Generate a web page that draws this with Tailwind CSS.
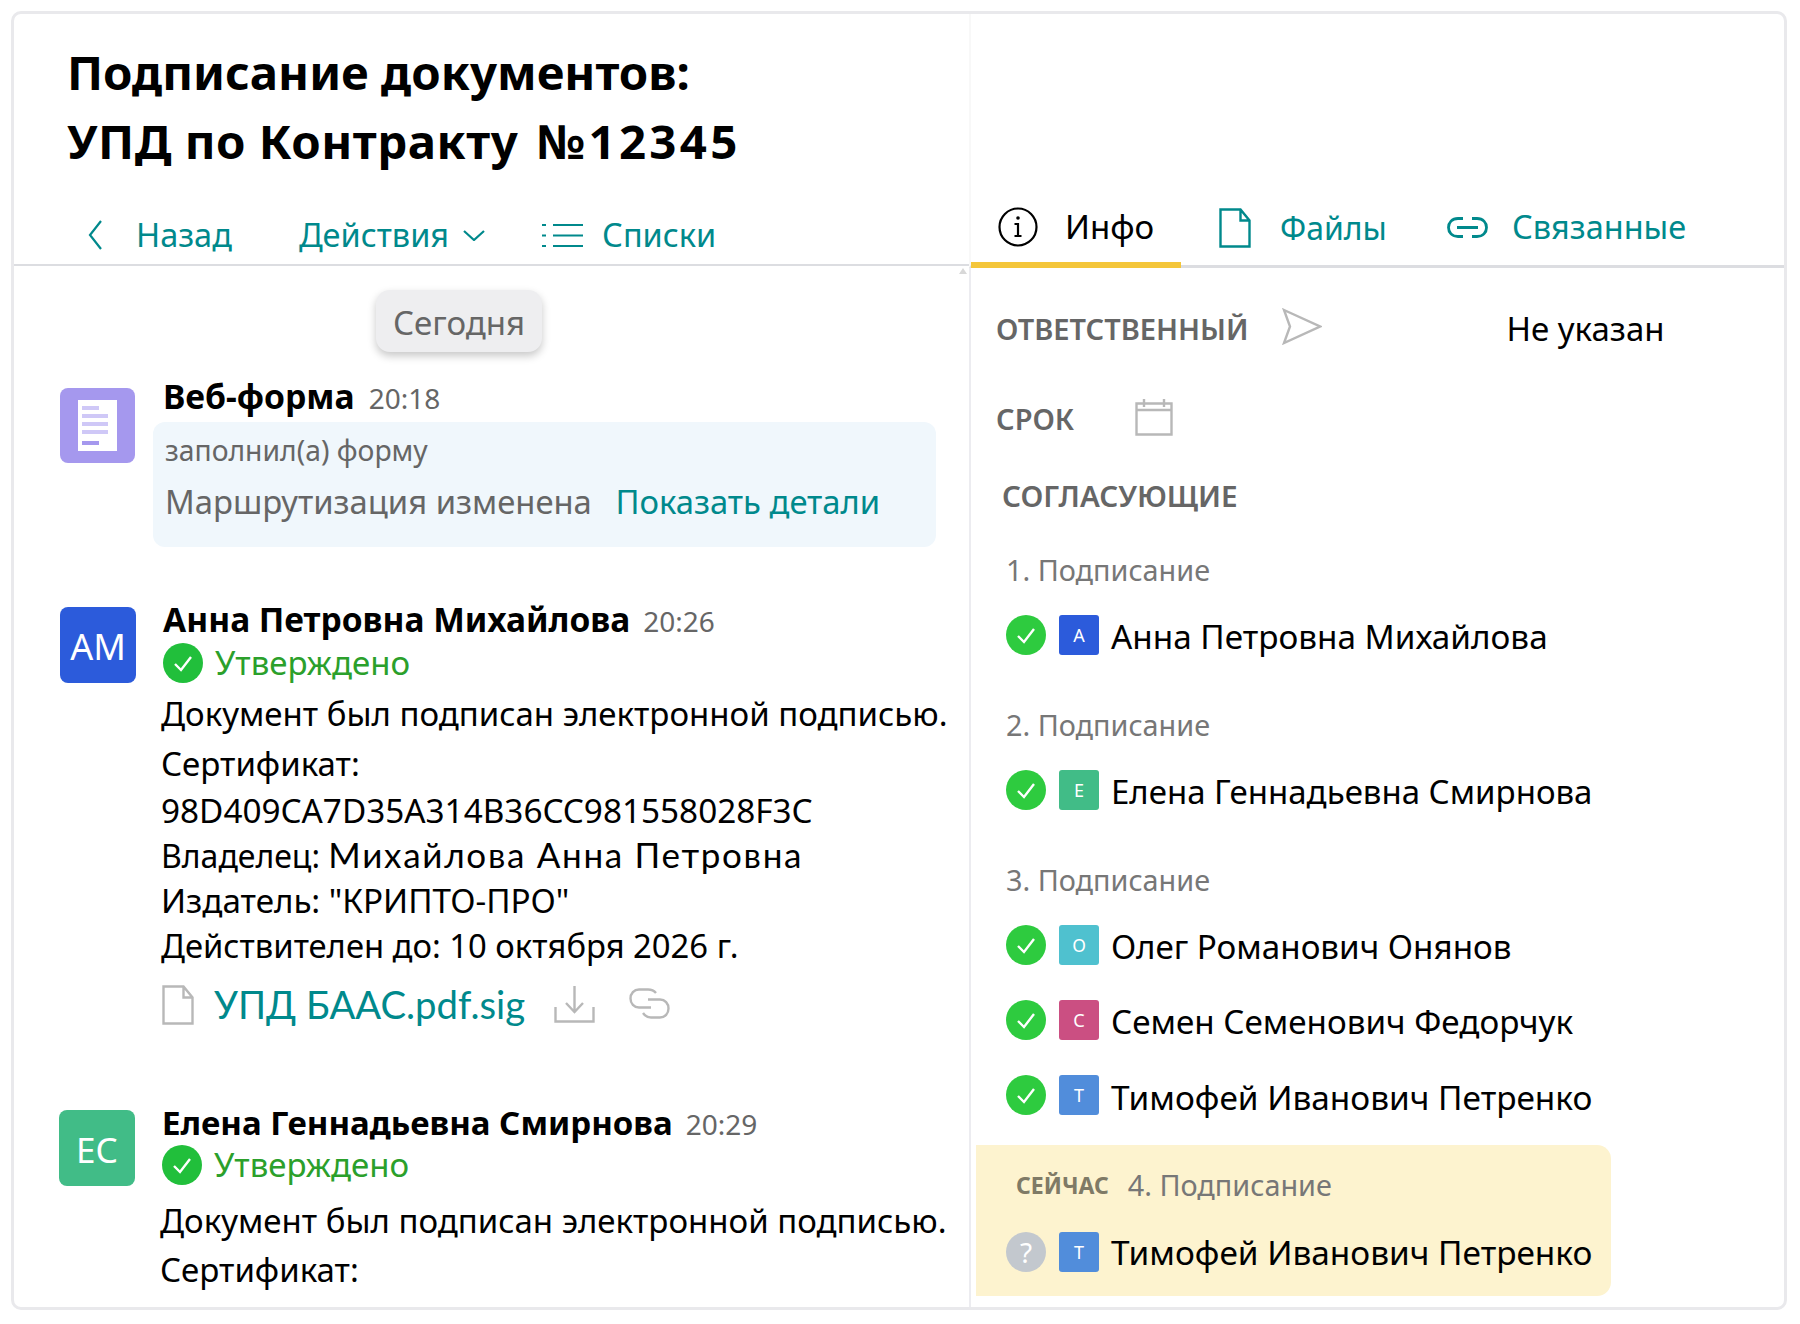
<!DOCTYPE html>
<html lang="ru">
<head>
    <meta charset="UTF-8">
    <title>Подписание документов</title>
    <script src="https://cdn.jsdelivr.net/npm/@tailwindcss/browser@4"></script>
</head>
<body class="bg-white font-['Noto_Sans',sans-serif] text-black">
    <div class="w-[1800px] h-[1324px] pt-[11px] pl-[11px]">
        <div class="flex w-[1776px] h-[1299px] border-[3px] border-[#e9e9ec] rounded-[10px] overflow-hidden box-border">
            <!-- left -->
            <div class="relative w-[955px] shrink-0 overflow-hidden">
                <div class="absolute right-[2px] top-[254px] w-0 h-0 border-x-[4px] border-b-[6px] border-x-transparent border-b-[#d8d8d8]"></div>
                <h1 class="pl-[53px] pt-[23px] text-[47.4px] leading-[69px] font-bold">Подписание документов:<br><span class="tracking-[0.5px]">УПД по Контракту</span> <span class="ml-[6px] tracking-[3.3px]">№12345</span></h1>
                <div class="flex items-center h-[58px] mt-[31px] text-[32.5px] text-[#00898c]">
                    <svg class="ml-[74px] w-[14px] h-[30px]" viewBox="0 0 14 30" fill="none" stroke="#00898c" stroke-width="2.2"><path d="M13 1 2 15l11 14"/></svg>
                    <span class="ml-[34px]">Назад</span>
                    <span class="ml-[67px]">Действия</span>
                    <svg class="ml-[14px] w-[22px] h-[11px]" viewBox="0 0 22 11" fill="none" stroke="#00898c" stroke-width="2.2"><path d="m1 1 10 9 10-9"/></svg>
                    <svg class="ml-[57px] w-[41px] h-[24px]" viewBox="0 0 41 24" fill="none" stroke="#00898c" stroke-width="2.2"><path d="M0 2h4M11 2h30M0 12.500h4M11 12.500h30M0 23h4M11 23h30"/></svg>
                    <span class="ml-[19px]">Списки</span>
                </div>
                <div class="h-[2px] bg-[#dcdde1]"></div>

                <div class="flex mt-[24px] ml-[362px] w-[166px] h-[62px] pt-[3px] items-center justify-center rounded-[14px] bg-[#eeeef0] shadow-[0_4px_8px_rgba(0,0,0,0.22)] text-[33px] text-[#666]">Сегодня</div>

                <!-- web form -->
                <div class="flex mt-[36px] ml-[46px]">
                    <div class="flex w-[75px] h-[75px] shrink-0 items-center justify-center rounded-[8px] bg-[#a598ee]">
                        <div class="flex flex-col w-[39px] h-[51px] gap-[4px] bg-white px-[4px] pt-[6px]">
                            <div class="h-[4px] w-[17px] bg-[#cfc8f7]"></div>
                            <div class="h-[4px] w-[26px] bg-[#cfc8f7]"></div>
                            <div class="h-[4px] w-[26px] bg-[#cfc8f7]"></div>
                            <div class="h-[4px] w-[26px] bg-[#cfc8f7]"></div>
                            <div class="h-[4px] w-[17px] mt-[3px] bg-[#a598ee]"></div>
                        </div>
                    </div>
                    <div class="ml-[18px] w-[783px]">
                        <div class="flex items-baseline h-[34px] leading-[34px] ml-[10px] -mt-[9px]">
                            <span class="text-[33.7px] font-bold">Веб-форма</span>
                            <span class="ml-[14px] text-[28px] text-[#666]">20:18</span>
                        </div>
                        <div class="mt-[9px] h-[125px] rounded-[12px] bg-[#f0f7fc] pl-[12px] pt-[7px]">
                            <div class="text-[28.3px] leading-[42px] text-[#666]">заполнил(а) форму</div>
                            <div class="mt-[6px] text-[32.8px] leading-[50px] text-[#666]">Маршрутизация изменена <span class="ml-[15px] text-[#00898c]">Показать детали</span></div>
                        </div>
                    </div>
                </div>

                <!-- anna -->
                <div class="flex mt-[60px] ml-[46px]">
                    <div class="flex w-[76px] h-[76px] pt-[4px] shrink-0 items-center justify-center rounded-[8px] bg-[#2c5bdb] text-[36px] text-white">АМ</div>
                    <div class="ml-[27px] -mt-[9px]">
                        <div class="flex items-baseline h-[42px] leading-[42px]">
                            <span class="text-[33.5px] font-bold">Анна Петровна Михайлова</span>
                            <span class="ml-[13px] text-[28px] text-[#666]">20:26</span>
                        </div>
                        <div class="flex items-center h-[45px] text-[33px] text-[#2ba02b]">
                            <svg class="w-[40px] h-[40px]" viewBox="0 0 40 40"><circle cx="20" cy="20" r="20" fill="#21bf3b"/><path d="m12 21 6 6 10-13" fill="none" stroke="#fff" stroke-width="2.4"/></svg>
                            <span class="ml-[12px]">Утверждено</span>
                        </div>
                        <div class="-ml-[2px] text-[33px]">
                            <div class="mt-[6px] leading-[46px]">Документ был подписан электронной подписью.</div>
                            <div class="mt-[5px] leading-[44px]">Сертификат:</div>
                            <div class="mt-[2px] leading-[44px] text-[33.3px]">98D409CA7D35A314B36CC981558028F3C</div>
                            <div class="-mt-[1px] leading-[46px] text-[32px]">Владелец: <span class="font-['Lato',sans-serif] text-[35px] tracking-[1.7px]">Михайлова Анна Петровна</span></div>
                            <div class="leading-[44px] text-[33.2px]">Издатель: "КРИПТО-ПРО"</div>
                            <div class="leading-[46px] text-[32.8px]">Действителен до: 10 октября 2026 г.</div>
                            <div class="flex items-center mt-[13px] h-[46px] ml-[1px]">
                                <svg class="w-[32px] h-[40px]" viewBox="0 0 32 40" fill="none" stroke="#b8b8b8" stroke-width="2.4"><path d="M1.500 1.500h20l9 11v26h-29zM21.500 1.500v11h9"/></svg>
                                <span class="ml-[20px] font-['Lato',sans-serif] text-[38.3px] text-[#00898c]">УПД БААС.pdf.sig</span>
                                <svg class="ml-[29px] w-[41px] h-[38px] -translate-y-[1px]" viewBox="0 0 41 38" fill="none" stroke="#b8b8b8" stroke-width="2.4"><path d="M1.500 22v14.500h38V22M20.500 1v25M12 18l8.500 9 8.500-9"/></svg>
                                <svg class="ml-[34px] w-[41px] h-[31px] -translate-y-[2px]" viewBox="0 0 41 31" fill="none" stroke="#b8b8b8" stroke-width="2.4"><path d="M27 5C25 2.500 22 1.500 19 1.500h-9C5 1.500 1.500 5.500 1.500 10.500s3.500 9 8.500 9h12M14 25c2 3 5 4.500 8 4.500h9c5 0 8.500-4 8.500-9s-3.500-9-8.500-9H19"/></svg>
                            </div>
                        </div>
                    </div>
                </div>

                <!-- elena -->
                <div class="flex mt-[82px] ml-[45px]">
                    <div class="flex w-[76px] h-[76px] pt-[4px] shrink-0 items-center justify-center rounded-[8px] bg-[#41bc87] text-[35px] text-white">ЕС</div>
                    <div class="ml-[27px] -mt-[8px]">
                        <div class="flex items-baseline h-[41px] leading-[41px]">
                            <span class="text-[33px] font-bold">Елена Геннадьевна Смирнова</span>
                            <span class="ml-[13px] text-[28px] text-[#666]">20:29</span>
                        </div>
                        <div class="flex items-center h-[44px] text-[33px] text-[#2ba02b]">
                            <svg class="w-[40px] h-[40px]" viewBox="0 0 40 40"><circle cx="20" cy="20" r="20" fill="#21bf3b"/><path d="m12 21 6 6 10-13" fill="none" stroke="#fff" stroke-width="2.4"/></svg>
                            <span class="ml-[12px]">Утверждено</span>
                        </div>
                        <div class="-ml-[2px] text-[33px]">
                            <div class="mt-[11px] leading-[46px]">Документ был подписан электронной подписью.</div>
                            <div class="mt-[4px] leading-[44px]">Сертификат:</div>
                        </div>
                    </div>
                </div>
            </div>

            <!-- right -->
            <div class="flex flex-1 flex-col min-w-0">
                <div class="flex h-[254px] shrink-0 items-end border-b-[3px] border-l-2 border-b-[#dcdde1] border-l-[#f8f8f8]">
                    <div class="flex items-center w-[210px] h-[70px] -mb-[3px] border-b-[6px] border-[#f4c63a] pb-[6px] pl-[27px]">
                        <svg class="w-[40px] h-[40px]" viewBox="0 0 40 40" fill="none" stroke="#000" stroke-width="2.2"><circle cx="20" cy="20" r="18.500"/><circle cx="20" cy="11" r="1.800" fill="#000" stroke="none"/><path d="M16.500 17H20v12h-3.500M20 29h3.500"/></svg>
                        <span class="ml-[27px] text-[33px]">Инфо</span>
                    </div>
                    <div class="flex items-center h-[70px] pb-[11px] ml-[38px] -mb-[3px] text-[32px] text-[#00898c]">
                        <svg class="w-[32px] h-[40px]" viewBox="0 0 32 40" fill="none" stroke="#00898c" stroke-width="2.4"><path d="M1.500 1.500h20l9 11v26h-29zM21.500 1.500v11h9"/></svg>
                        <span class="ml-[29px]">Файлы</span>
                    </div>
                    <div class="flex items-center h-[70px] pb-[11px] ml-[60px] -mb-[3px] text-[32.5px] text-[#00898c]">
                        <svg class="w-[41px] h-[21px]" viewBox="0 0 41 21" fill="none" stroke="#00898c" stroke-width="2.8"><path d="M16 1.500h-5C5 1.500 1.500 5.500 1.500 10.500S5 19.500 11 19.500h5M25 1.500h5c6 0 9.500 4 9.500 9s-3.500 9-9.500 9h-5M10 10.500h21"/></svg>
                        <span class="ml-[24px]">Связанные</span>
                    </div>
                </div>

                <div class="flex-1 border-l-2 border-[#ececf0]">
                    <div class="flex items-center h-[44px] mt-[39px] pl-[25px]">
                        <span class="text-[29px] font-semibold text-[#666]">ОТВЕТСТВЕННЫЙ</span>
                        <svg class="ml-[34px] w-[40px] h-[37px] -translate-y-[3px]" viewBox="0 0 40 37" fill="none" stroke="#b8b8b8" stroke-width="2.4"><path d="M2 2 38 18.500 2 35l6-16.500z"/></svg>
                        <span class="ml-[184px] text-[33px]">Не указан</span>
                    </div>
                    <div class="flex items-center h-[44px] mt-[46px] pl-[25px]">
                        <span class="text-[29px] font-semibold text-[#666]">СРОК</span>
                        <svg class="ml-[61px] w-[38px] h-[37px] -translate-y-[2px]" viewBox="0 0 38 37" fill="none" stroke="#b8b8b8" stroke-width="2.4"><path d="M1.500 4.500h35v31h-35zM1.500 11h35M9 0v8M29 0v8"/></svg>
                    </div>
                    <div class="h-[44px] leading-[44px] mt-[33px] pl-[31px] text-[29.6px] font-semibold text-[#666]">СОГЛАСУЮЩИЕ</div>

                    <div class="h-[44px] leading-[44px] mt-[30px] pl-[35px] text-[28.8px] text-[#777]">1. Подписание</div>
                    <div class="flex items-center h-[44px] mt-[21px] pl-[35px]">
                        <svg class="w-[40px] h-[40px]" viewBox="0 0 40 40"><circle cx="20" cy="20" r="20" fill="#2ecb3f"/><path d="m12 21 6 6 10-13" fill="none" stroke="#fff" stroke-width="2.4"/></svg>
                        <div class="flex w-[40px] h-[40px] ml-[13px] items-center justify-center rounded-[3px] bg-[#2c5bdb] text-[18px] text-white">А</div>
                        <span class="ml-[12px] translate-y-[2px] text-[33.3px]">Анна Петровна Михайлова</span>
                    </div>

                    <div class="h-[44px] leading-[44px] mt-[46px] pl-[35px] text-[28.8px] text-[#777]">2. Подписание</div>
                    <div class="flex items-center h-[44px] mt-[21px] pl-[35px]">
                        <svg class="w-[40px] h-[40px]" viewBox="0 0 40 40"><circle cx="20" cy="20" r="20" fill="#2ecb3f"/><path d="m12 21 6 6 10-13" fill="none" stroke="#fff" stroke-width="2.4"/></svg>
                        <div class="flex w-[40px] h-[40px] ml-[13px] items-center justify-center rounded-[3px] bg-[#41bc87] text-[18px] text-white">Е</div>
                        <span class="ml-[12px] translate-y-[2px] text-[33px]">Елена Геннадьевна Смирнова</span>
                    </div>

                    <div class="h-[44px] leading-[44px] mt-[46px] pl-[35px] text-[28.8px] text-[#777]">3. Подписание</div>
                    <div class="flex items-center h-[44px] mt-[21px] pl-[35px]">
                        <svg class="w-[40px] h-[40px]" viewBox="0 0 40 40"><circle cx="20" cy="20" r="20" fill="#2ecb3f"/><path d="m12 21 6 6 10-13" fill="none" stroke="#fff" stroke-width="2.4"/></svg>
                        <div class="flex w-[40px] h-[40px] ml-[13px] items-center justify-center rounded-[3px] bg-[#4fc1cf] text-[18px] text-white">О</div>
                        <span class="ml-[12px] translate-y-[2px] text-[33.2px]">Олег Романович Онянов</span>
                    </div>
                    <div class="flex items-center h-[44px] mt-[31px] pl-[35px]">
                        <svg class="w-[40px] h-[40px]" viewBox="0 0 40 40"><circle cx="20" cy="20" r="20" fill="#2ecb3f"/><path d="m12 21 6 6 10-13" fill="none" stroke="#fff" stroke-width="2.4"/></svg>
                        <div class="flex w-[40px] h-[40px] ml-[13px] items-center justify-center rounded-[3px] bg-[#cb4f82] text-[18px] text-white">С</div>
                        <span class="ml-[12px] translate-y-[2px] text-[33.2px]">Семен Семенович Федорчук</span>
                    </div>
                    <div class="flex items-center h-[44px] mt-[31px] pl-[35px]">
                        <svg class="w-[40px] h-[40px]" viewBox="0 0 40 40"><circle cx="20" cy="20" r="20" fill="#2ecb3f"/><path d="m12 21 6 6 10-13" fill="none" stroke="#fff" stroke-width="2.4"/></svg>
                        <div class="flex w-[40px] h-[40px] ml-[13px] items-center justify-center rounded-[3px] bg-[#518ddb] text-[18px] text-white">Т</div>
                        <span class="ml-[12px] translate-y-[2px] text-[33.4px]">Тимофей Иванович Петренко</span>
                    </div>

                    <div class="ml-[5px] mt-[28px] w-[635px] h-[151px] rounded-r-[14px] bg-[#fdf3cf] pt-[18px]">
                        <div class="flex items-center h-[44px] pl-[40px]">
                            <span class="text-[23px] font-bold text-[#7f7a66]">СЕЙЧАС</span>
                            <span class="ml-[19px] text-[28.8px] text-[#777]">4. Подписание</span>
                        </div>
                        <div class="flex items-center h-[44px] mt-[23px] pl-[30px]">
                            <div class="flex w-[40px] h-[40px] items-center justify-center rounded-full bg-[#c3c8ce] text-[28px] text-white">?</div>
                            <div class="flex w-[40px] h-[40px] ml-[13px] items-center justify-center rounded-[3px] bg-[#518ddb] text-[18px] text-white">Т</div>
                            <span class="ml-[12px] text-[33.4px]">Тимофей Иванович Петренко</span>
                        </div>
                    </div>
                </div>
            </div>
        </div>
    </div>
</body>
</html>
